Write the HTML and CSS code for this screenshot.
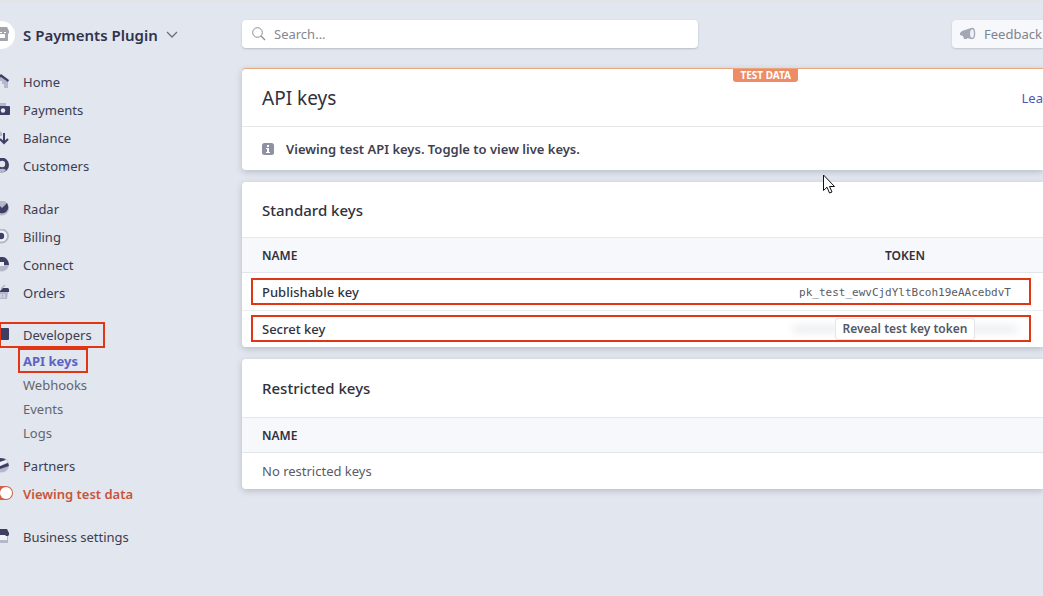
FILE: index.html
```
<!DOCTYPE html>
<html lang="en">
<head>
  <meta charset="UTF-8">
  <meta name="viewport" content="width=device-width, initial-scale=1.0">
  <title>API keys</title>
  <link rel="stylesheet" href="styles.css">
</head>
<body>
  <div class="app">
    <aside class="sidebar">
      <button class="account" type="button">
        <svg class="account-logo" viewBox="0 0 15 28">
          <circle cx="1" cy="14" r="14" fill="#fff"/>
          <path d="M0 6h7l2 4v2l-1 1v6a1 1 0 0 1-1 1H0v-3h5v-4H0z" fill="#a3a4ab"/>
          <path d="M0 11h2v1H0zM4 11h2v1H4z" fill="#fff"/>
        </svg>
        <span>S Payments Plugin</span>
        <svg class="chevron" viewBox="0 0 12 8"><path d="M1 1l5 5 5-5" fill="none" stroke="#6b7080" stroke-width="1.3"/></svg>
      </button>

      <nav class="nav">
        <ul class="nav-group">
          <li><a class="nav-item" href="#"><svg class="icon" viewBox="0 0 10 16"><path d="M0 3h2l6 4v7H4v-4H2V7H0z" fill="#b4b8ca"/><path d="M0 1l1-1 8 6-1 2-7-5-1 .5z" fill="#3f3f66"/></svg>Home</a></li>
          <li><a class="nav-item" href="#"><svg class="icon" viewBox="0 0 10 16"><path d="M0 1h6v3H0z" fill="#b4b8ca"/><path d="M0 4h9a1 1 0 0 1 1 1v7a1 1 0 0 1-1 1H0z" fill="#3f3f66"/><circle cx="3" cy="8.500" r="2.200" fill="#e8ebf5"/></svg>Payments</a></li>
          <li><a class="nav-item" href="#"><svg class="icon" viewBox="0 0 10 16"><path d="M0 1l2 2v3H0z" fill="#b4b8ca"/><path d="M4 3v10M0 9l4 4 4-4" fill="none" stroke="#3f3f66" stroke-width="2"/></svg>Balance</a></li>
          <li><a class="nav-item" href="#"><svg class="icon" viewBox="0 0 10 16"><circle cx="1.500" cy="7" r="7.500" fill="#3f3f66"/><circle cx="2" cy="6" r="3.200" fill="#e2e6ee"/><path d="M0 11q4-1 6 1-2 3-6 3z" fill="#b4b8ca"/></svg>Customers</a></li>
        </ul>

        <ul class="nav-group">
          <li><a class="nav-item" href="#"><svg class="icon" viewBox="0 0 10 16"><circle cx="1.500" cy="7" r="7.500" fill="#b4b8ca"/><path d="M0 5l2 2 5-5q3 5-1 9-3 2-6 1z" fill="#3f3f66"/></svg>Radar</a></li>
          <li><a class="nav-item" href="#"><svg class="icon" viewBox="0 0 10 16"><circle cx="1.500" cy="7" r="6.500" fill="#f0f2f8" stroke="#b4b8ca" stroke-width="2"/><circle cx="1" cy="7" r="3.200" fill="#3f3f66"/></svg>Billing</a></li>
          <li><a class="nav-item" href="#"><svg class="icon" viewBox="0 0 10 16"><circle cx="1.500" cy="7" r="7.500" fill="#b4b8ca"/><path d="M0 0q8-1 9 8H4V5H0z" fill="#3f3f66"/><path d="M0 5h4v4H0z" fill="#f0f2f8"/></svg>Connect</a></li>
          <li><a class="nav-item" href="#"><svg class="icon" viewBox="0 0 10 16"><path d="M0 7h8l-1 7H0z" fill="#b4b8ca"/><path d="M1 9v4M4 9v4" stroke="#e8ebf5"/><path d="M1 4l4-4" stroke="#b4b8ca" stroke-width="1.500"/><path d="M0 6l3-3h5l1 1v3H0z" fill="#3f3f66"/></svg>Orders</a></li>
        </ul>

        <ul class="nav-group">
          <li>
            <a class="nav-item marked" href="#"><svg class="icon" viewBox="0 0 10 16"><path d="M0 1h7a1 1 0 0 1 1 1v10a1 1 0 0 1-1 1H0z" fill="#3f3f66"/></svg>Developers</a>
            <ul class="subnav">
              <li><a class="subnav-item active" href="#">API keys</a></li>
              <li><a class="subnav-item" href="#">Webhooks</a></li>
              <li><a class="subnav-item" href="#">Events</a></li>
              <li><a class="subnav-item" href="#">Logs</a></li>
            </ul>
          </li>
          <li><a class="nav-item" href="#"><svg class="icon" viewBox="0 0 10 16"><circle cx="1.500" cy="7" r="7.500" fill="#b4b8ca"/><path d="M0 0q4 0 6 2L0 4zM0 8l8-3 1 3-9 3z" fill="#3f3f66"/><path d="M0 4l6-2 2 2-8 4z" fill="#f0f2f8"/></svg>Partners</a></li>
          <li><a class="nav-item test-mode" href="#"><svg class="icon toggle" viewBox="0 0 13 16"><path d="M0 0h6a7 7 0 0 1 0 14H0z" fill="#c9634a"/><circle cx="6" cy="7" r="6" fill="#fff"/></svg>Viewing test data</a></li>
        </ul>

        <ul class="nav-group">
          <li><a class="nav-item" href="#"><svg class="icon" viewBox="0 0 10 16"><path d="M0 6h8v8H0z" fill="#b4b8ca"/><path d="M0 6h7v5H0z" fill="#f0f2f8"/><path d="M0 0h7l2 4v2l-1 1H6L5 6H0z" fill="#3f3f66"/></svg>Business settings</a></li>
        </ul>
      </nav>
    </aside>

    <main class="main">
      <header class="topbar">
        <label class="search">
          <svg class="search-icon" viewBox="0 0 14 14"><circle cx="5.500" cy="5.500" r="4.800" fill="none" stroke="#8a8d96"/><path d="M9 9l4 4" stroke="#8a8d96" stroke-width="1.300"/></svg>
          <input type="search" placeholder="Search..." aria-label="Search">
        </label>
        <button class="feedback" type="button">
          <svg class="feedback-icon" viewBox="0 0 16 14"><path d="M0 6l2-2 9-3v11l-4-1v1H4l-1-3-3-1z" fill="#a3a7b5"/><ellipse cx="12" cy="6.500" rx="2.600" ry="5" fill="#eef1f7" stroke="#a3a7b5" stroke-width="1.300"/></svg>
          Feedback
        </button>
      </header>

      <section class="card card-test">
        <span class="badge">TEST DATA</span>
        <div class="card-title">
          <h1>API keys</h1>
          <a class="learn" href="#">Lea</a>
        </div>
        <p class="notice">
          <svg class="info-icon" viewBox="0 0 12 12"><rect width="12" height="12" rx="2.500" fill="#8d91a3"/><path d="M5 2h2v2H5zM4 5h3v4h1v1H4V9h1V6H4z" fill="#fff"/></svg>
          Viewing test API keys. Toggle to view live keys.
        </p>
      </section>

      <section class="card">
        <h2>Standard keys</h2>
        <table class="keys">
          <thead>
            <tr><th>NAME</th><th class="token">TOKEN</th></tr>
          </thead>
          <tbody>
            <tr class="marked-row">
              <td>Publishable key</td>
              <td class="token"><code>pk_test_ewvCjdYltBcoh19eAAcebdvT</code></td>
            </tr>
            <tr class="marked-row">
              <td>Secret key</td>
              <td class="token"><div class="hidden-token"><button class="reveal" type="button">Reveal test key token</button></div></td>
            </tr>
          </tbody>
        </table>
      </section>

      <section class="card">
        <h2 class="roomy">Restricted keys</h2>
        <table class="keys">
          <thead>
            <tr><th>NAME</th></tr>
          </thead>
          <tbody>
            <tr><td class="empty">No restricted keys</td></tr>
          </tbody>
        </table>
      </section>
    </main>
  </div>

  <svg class="cursor" viewBox="0 0 12 20"><path d="M.5 1v15.500l3.500-3.300 2.500 5.800 2.500-1-2.500-5.500h5z" fill="#fff" stroke="#111"/></svg>
</body>
</html>
```
FILE: styles.css
```
* {
  box-sizing: border-box;
}
body {
  margin: 0;
  min-height: 100vh;
  border-top: 2px solid #e5e4e5;
  background: #e2e6ee;
  color: #30313d;
  font-family: "Noto Sans", "Open Sans", sans-serif;
  font-size: 13px;
  line-height: 20px;
  overflow-x: hidden;
}
a {
  color: inherit;
  text-decoration: none;
}
button,
input {
  font: inherit;
  color: inherit;
}
ul {
  list-style: none;
  margin: 0;
  padding: 0;
}
h1,
h2,
p {
  margin: 0;
}
.app {
  display: flex;
}

/* sidebar */
.sidebar {
  flex: 0 0 242px;
  padding-top: 18px;
}
.account {
  display: flex;
  align-items: center;
  gap: 8px;
  height: 30px;
  padding: 0;
  border: 0;
  background: none;
  font-size: 15px;
  font-weight: 600;
  color: #30324c;
}
.account-logo {
  width: 15px;
  height: 28px;
}
.chevron {
  width: 12px;
  height: 8px;
}
.nav {
  display: flex;
  flex-direction: column;
  gap: 15px;
  padding-top: 18px;
}
.nav-item {
  display: flex;
  align-items: center;
  width: 105px;
  height: 28px;
  white-space: nowrap;
  color: #3b3d52;
}
.icon {
  flex: none;
  width: 10px;
  height: 16px;
  margin-right: 13px;
}
.toggle {
  width: 13px;
  margin-right: 10px;
}
.marked {
  height: 26px;
  border: 2px solid #e03616;
  border-left-width: 1px;
}
.marked .icon {
  margin-right: 12px;
}
.test-mode {
  color: #c8543c;
  font-weight: 600;
}
.subnav {
  padding: 0 0 7px 18px;
}
.subnav-item {
  display: block;
  width: 70px;
  height: 24px;
  padding-left: 5px;
  line-height: 24px;
  color: #62656f;
}
.subnav-item.active {
  height: 25px;
  padding-left: 3px;
  border: 2px solid #e03616;
  line-height: 22px;
  font-weight: 700;
  color: #5b63c4;
}

/* content */
.main {
  flex: 1;
  min-width: 0;
  padding-top: 18px;
}
.topbar {
  display: flex;
  justify-content: space-between;
  margin-bottom: 20px;
}
.search {
  display: flex;
  align-items: center;
  gap: 8px;
  flex: 0 1 456px;
  height: 28px;
  padding: 0 10px;
  border-radius: 4px;
  background: #fff;
  box-shadow: 0 1px 2px rgba(60, 66, 87, 0.25);
}
.search-icon {
  flex: none;
  width: 14px;
  height: 14px;
}
.search input {
  flex: 1;
  min-width: 0;
  padding: 0;
  border: 0;
  outline: 0;
  background: none;
}
.search input::placeholder {
  color: #85878d;
}
.feedback {
  display: flex;
  align-items: center;
  gap: 8px;
  flex: 0 0 91px;
  height: 28px;
  padding: 0 0 0 8px;
  border: 0;
  border-radius: 4px 0 0 4px;
  background: #f6f8fc;
  box-shadow: 0 1px 2px rgba(60, 66, 87, 0.2);
  color: #80838c;
}
.feedback-icon {
  flex: none;
  width: 16px;
  height: 14px;
}
.card {
  margin-bottom: 12px;
  border-radius: 4px 0 0 4px;
  background: #fff;
  box-shadow: 0 2px 6px rgba(60, 66, 87, 0.25);
}
.card-test {
  position: relative;
  border-top: 1px solid #e9a57e;
}
.badge {
  position: absolute;
  top: 0;
  right: 245px;
  height: 13px;
  padding: 0 7px;
  border-radius: 0 0 3px 3px;
  background: #ee8d65;
  color: #fff;
  font-size: 10px;
  font-weight: 700;
  line-height: 13px;
}
.card-title {
  display: flex;
  align-items: center;
  justify-content: space-between;
  height: 58px;
  padding-left: 20px;
  border-bottom: 1px solid #e6e7eb;
}
h1 {
  font-size: 19px;
  font-weight: 400;
}
.learn {
  color: #5654b4;
}
.notice {
  display: flex;
  align-items: center;
  gap: 12px;
  padding: 12px 20px 11px;
  font-weight: 600;
  color: #3f4150;
}
.info-icon {
  width: 12px;
  height: 12px;
}
h2 {
  padding: 18px 20px 17px;
  font-size: 15px;
  font-weight: 500;
}
h2.roomy {
  padding: 19px 20px;
}
.keys {
  width: 100%;
  border-collapse: separate;
  border-spacing: 0;
  text-align: left;
}
.keys th {
  height: 36px;
  padding: 2px 20px 0;
  border-top: 1px solid #e6e7eb;
  border-bottom: 1px solid #e3e5ec;
  background: #f7f8fc;
  font-size: 12px;
  font-weight: 600;
}
.keys td {
  height: 37px;
  padding: 0 20px;
  font-weight: 500;
}
.keys .token {
  width: 244px;
  padding-left: 0;
  padding-right: 32px;
  text-align: center;
}
.keys .empty {
  height: 36px;
  font-weight: 400;
  color: #595b66;
}
.marked-row + .marked-row td {
  border-top: 1px solid #eceef2;
}
.marked-row {
  position: relative;
}
.marked-row::after {
  content: "";
  position: absolute;
  inset: 5px 12px 5px 9px;
  border: 2px solid #e03616;
  pointer-events: none;
}
code {
  font-family: "DejaVu Sans Mono", monospace;
  font-size: 11px;
  color: #595b66;
}
.hidden-token {
  position: relative;
}
.hidden-token::before {
  content: "";
  position: absolute;
  inset: 8px -6px;
  background: #e6e8ec;
  filter: blur(4px);
}
.reveal {
  position: relative;
  height: 22px;
  padding: 0 7px;
  border: 1px solid #e3e5ea;
  border-radius: 3px;
  background: #fff;
  font-size: 12px;
  font-weight: 600;
  line-height: 20px;
  color: #555866;
}
.cursor {
  position: absolute;
  left: 823px;
  top: 174px;
  width: 12px;
  height: 20px;
}
```
